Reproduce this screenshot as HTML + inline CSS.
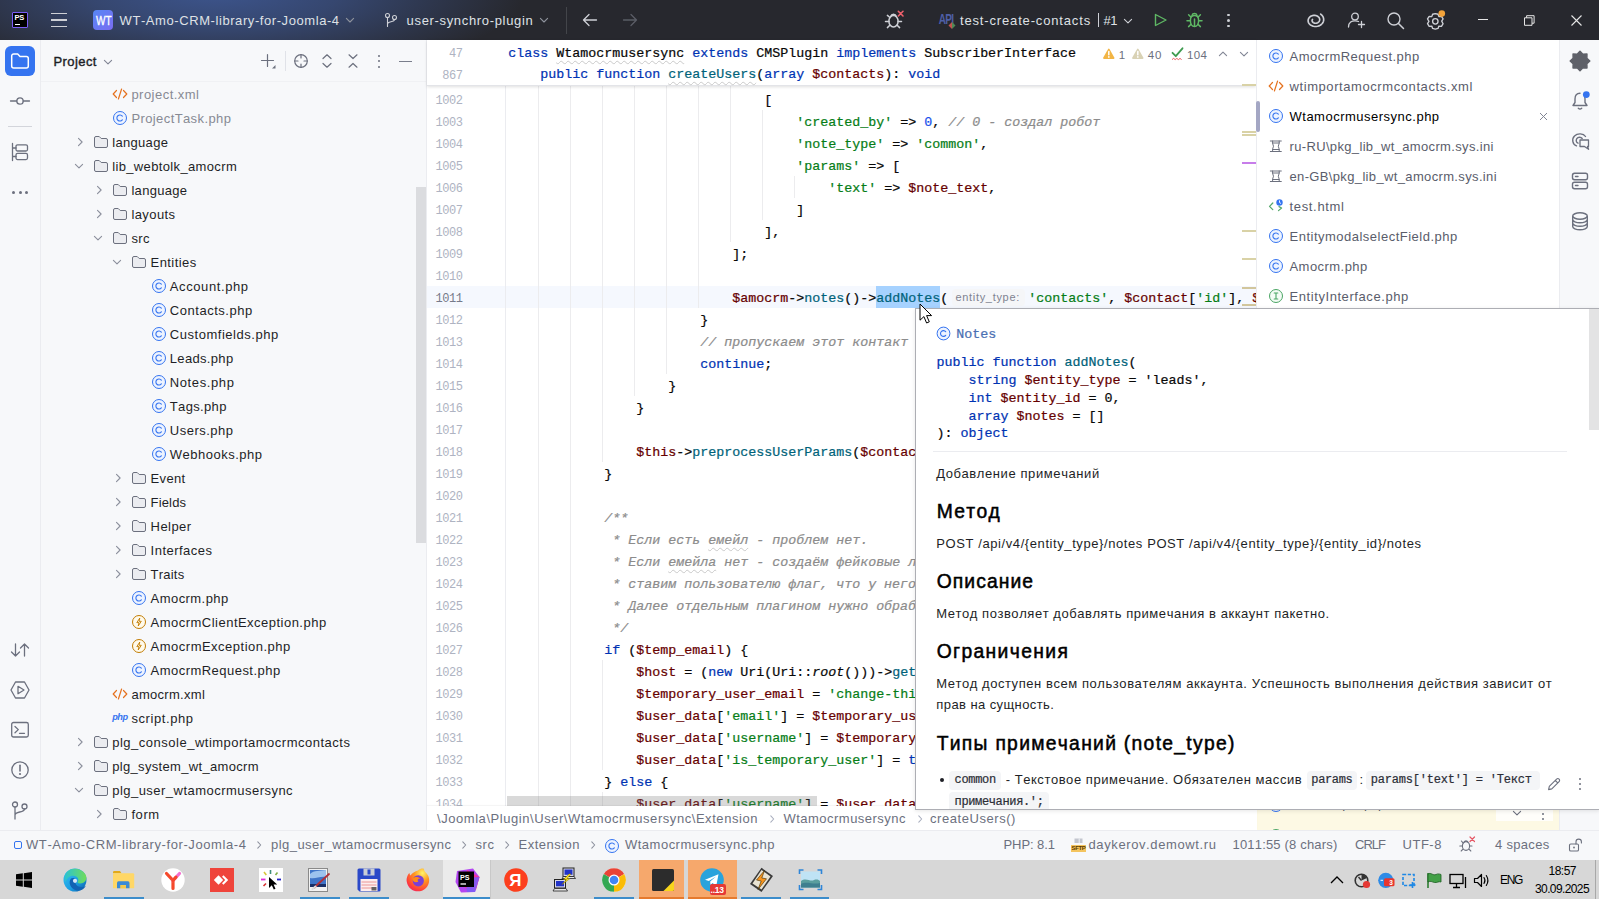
<!DOCTYPE html><html><head><meta charset="utf-8"><title>PhpStorm</title><style>
html,body{margin:0;padding:0;}
body{width:1599px;height:899px;overflow:hidden;position:relative;background:#f7f8fa;font-family:"Liberation Sans",sans-serif;font-size:13px;font-kerning:none;}
.t{position:absolute;white-space:pre;}
.b{position:absolute;}
svg{position:absolute;overflow:visible;}
.c{-webkit-text-stroke:0.22px currentColor;position:absolute;white-space:pre;font-family:"Liberation Mono",monospace;font-size:13.331px;line-height:22px;height:22px;color:#080808;}
.k{color:#0033b3}.s{color:#067d17}.n{color:#1750eb}.v{color:#660000}.f{color:#00627a}.cm{color:#8c8c8c;font-style:italic}.i{font-style:italic}.lk{color:#4a6fb3}
.ln{position:absolute;font-family:"Liberation Mono",monospace;font-size:12px;letter-spacing:-0.45px;line-height:22px;color:#aeb3c2;text-align:right;width:40px;left:422.5px;white-space:pre;}
.wavy{text-decoration:underline wavy #c9c9c9 1px;text-underline-offset:3px;}
</style></head><body>
<div class="b" style="left:0;top:0;width:1599px;height:40px;background:radial-gradient(ellipse 310px 90px at 215px -8px,rgba(66,96,165,0.80) 0%,rgba(66,96,165,0.55) 40%,rgba(66,96,165,0.22) 75%,rgba(66,96,165,0) 100%),#27282e;"></div>
<div class="b" style="left:12px;top:12px;width:16px;height:16px;background:#000;border:1px solid #7a5cf5;box-sizing:border-box;border-radius:1px;"></div>
<div class="t" style="left:14.5px;top:14px;font-size:7.5px;line-height:8px;font-weight:700;color:#fff;letter-spacing:-0.2px">PS</div>
<div class="b" style="left:15px;top:23.6px;width:4.6px;height:1.2px;background:#fff;"></div>
<div class="b" style="left:51px;top:12.9px;width:16px;height:1.3px;background:#ced0d6;"></div>
<div class="b" style="left:51px;top:19.4px;width:16px;height:1.3px;background:#ced0d6;"></div>
<div class="b" style="left:51px;top:25.9px;width:16px;height:1.3px;background:#ced0d6;"></div>
<div class="b" style="left:93px;top:10px;width:20px;height:20px;background:linear-gradient(135deg,#5687f5,#7a6cf2);border-radius:4px;"></div>
<div class="t" style="left:95.8px;top:10.5px;line-height:20px;font-size:13.5px;font-weight:400;-webkit-text-stroke:0.35px #fff;color:#fff;transform:scaleX(0.74);transform-origin:0 50%;">WT</div>
<div class="t" style="left:119.60px;top:10.90px;line-height:20px;font-size:13px;color:#dfe1e5;letter-spacing:0.576px;">WT-Amo-CRM-library-for-Joomla-4</div>
<svg style="left:342px;top:12.3px;" width="16" height="16" viewBox="0 0 16 16" fill="none"><path d="M4.4 6.4 L8 10 L11.6 6.4" stroke="#8f939d" stroke-width="1.1" stroke-linecap="round" stroke-linejoin="round"/></svg>
<svg style="left:383px;top:12px;" width="16" height="16" viewBox="0 0 16 16" fill="none"><circle cx="4.5" cy="3.5" r="2" stroke="#ced0d6" stroke-width="1.1"/><circle cx="11.5" cy="5.5" r="2" stroke="#ced0d6" stroke-width="1.1"/><path d="M4.5 5.5 V14.5 M11.5 7.5 C11.5 10.5 4.5 9 4.5 12" stroke="#ced0d6" stroke-width="1.1" stroke-linecap="round"/></svg>
<div class="t" style="left:406.60px;top:10.90px;line-height:20px;font-size:13px;color:#dfe1e5;letter-spacing:0.665px;">user-synchro-plugin</div>
<svg style="left:536.3px;top:12.3px;" width="16" height="16" viewBox="0 0 16 16" fill="none"><path d="M4.4 6.4 L8 10 L11.6 6.4" stroke="#8f939d" stroke-width="1.1" stroke-linecap="round" stroke-linejoin="round"/></svg>
<div class="b" style="left:566px;top:7px;width:1px;height:27px;background:#43454a;"></div>
<svg style="left:582px;top:12px;" width="16" height="16" viewBox="0 0 16 16" fill="none"><path d="M14.5 8 H1.5 M7 2.5 L1.5 8 L7 13.5" stroke="#ced0d6" stroke-width="1.3" stroke-linecap="round" stroke-linejoin="round"/></svg>
<svg style="left:622px;top:12px;" width="16" height="16" viewBox="0 0 16 16" fill="none"><path d="M1.5 8 H14.5 M9 2.5 L14.5 8 L9 13.5" stroke="#5a5d66" stroke-width="1.3" stroke-linecap="round" stroke-linejoin="round"/></svg>
<svg style="left:884px;top:9px;" width="22" height="22" viewBox="0 0 22 22" fill="none"><ellipse cx="9.5" cy="12.2" rx="4.6" ry="5.7" stroke="#ced0d6" stroke-width="1.5"/><path d="M5.6 8.3 L3.4 6.4 M5 12.5 H1.5 M5.8 16.3 L3.4 18.6 M13.2 16.3 L15.6 18.6 M14 12.5 H17.5 M6.8 7.2 a2.8 2.8 0 0 1 5.4 0" stroke="#ced0d6" stroke-width="1.5" stroke-linecap="round"/><path d="M14.3 2.3 L19 7 M19 2.3 L14.3 7" stroke="#f0616d" stroke-width="1.6" stroke-linecap="round"/></svg>
<div class="t" style="left:938.8px;top:10.5px;font-size:10px;line-height:18px;font-weight:700;color:#4e5fa6;letter-spacing:-0.7px;transform:scaleY(1.4)">API</div>
<svg style="left:948px;top:21px;" width="8" height="9" viewBox="0 0 8 9" fill="none"><path d="M0.5 4.5 L4 1 V8 Z" fill="#c25450"/><path d="M7.5 4.5 L4 1 V8 Z" fill="#4f8a55"/></svg>
<div class="t" style="left:960.00px;top:10.90px;line-height:20px;font-size:13px;color:#dfe1e5;letter-spacing:0.842px;">test-create-contacts</div>
<div class="b" style="left:1097.5px;top:13px;width:1px;height:14px;background:#ced0d6;"></div>
<div class="t" style="left:1103.50px;top:10.90px;line-height:20px;font-size:13px;color:#dfe1e5;letter-spacing:-0.484px;">#1</div>
<svg style="left:1119.5px;top:13px;" width="16" height="16" viewBox="0 0 16 16" fill="none"><path d="M4.4 6.3 L8 9.9 L11.6 6.3" stroke="#ced0d6" stroke-width="1.1" stroke-linecap="round" stroke-linejoin="round"/></svg>
<svg style="left:1152px;top:12px;" width="16" height="16" viewBox="0 0 16 16" fill="none"><path d="M3.5 2.5 L14 8 L3.5 13.5 Z" stroke="#5fb865" stroke-width="1.4" stroke-linejoin="round"/></svg>
<svg style="left:1185px;top:11px;" width="19" height="18" viewBox="0 0 19 18" fill="none"><path d="M9.5 4.6 C12.3 4.6 13.6 6.6 13.6 9.5 C13.6 12.8 12 15.6 9.5 15.6 C7 15.6 5.4 12.8 5.4 9.5 C5.4 6.6 6.7 4.6 9.5 4.6 Z" stroke="#5fb865" stroke-width="1.5"/><path d="M5.8 6 L3.6 3.8 M13.2 6 L15.4 3.8 M5.3 9.8 H2 M13.7 9.8 H17 M6 13.3 L3.6 15.6 M13 13.3 L15.4 15.6 M7 4.4 a2.6 2.6 0 0 1 5 0 M9.5 8 V15" stroke="#5fb865" stroke-width="1.5" stroke-linecap="round"/></svg>
<div class="b" style="left:1227.2px;top:13.5px;width:2.6px;height:2.6px;background:#ced0d6;border-radius:2px"></div>
<div class="b" style="left:1227.2px;top:19.2px;width:2.6px;height:2.6px;background:#ced0d6;border-radius:2px"></div>
<div class="b" style="left:1227.2px;top:24.9px;width:2.6px;height:2.6px;background:#ced0d6;border-radius:2px"></div>
<svg style="left:1305.3px;top:9.8px;" width="20" height="20" viewBox="0 0 20 20" fill="none"><path transform="scale(1.1)" d="M6.84 8.55 L6.63 8.86 L6.49 9.21 L6.43 9.59 L6.46 9.99 L6.59 10.39 L6.80 10.78 L7.11 11.14 L7.51 11.46 L7.99 11.72 L8.54 11.91 L9.13 12.02 L9.76 12.04 L10.40 11.96 L11.03 11.78 L11.63 11.51 L12.17 11.14 L12.63 10.69 L12.99 10.16 L13.24 9.58 L13.36 8.95 L13.33 8.30 L13.16 7.65 L12.85 7.02 L12.39 6.44 L11.80 5.92 L11.09 5.49 L10.28 5.16 L9.40 4.95 L8.46 4.88 L7.51 4.94 L6.57 5.15 L5.67 5.50 L4.85 5.98 L4.14 6.59 L3.55 7.30 L3.13 8.11 L2.88 8.97 L2.83 9.88 L2.97 10.79 L3.32 11.68 L3.86 12.51 L4.59 13.27 L5.49 13.92 L6.52 14.43 L7.67 14.79 L8.90 14.98 L10.17 14.99 L11.44 14.81 L12.66 14.44 L13.80 13.89 L14.82 13.17 L15.67 12.31 L16.34 11.32 L16.78 10.23 L16.98 9.09 L16.93 7.91 L16.63 6.75 L16.06 5.64 L15.26 4.61 L14.23 3.71" stroke="#ced0d6" stroke-width="1.5" stroke-linecap="round" stroke-linejoin="round"/></svg>
<svg style="left:1347px;top:11px;" width="19" height="18" viewBox="0 0 19 18" fill="none"><circle cx="8" cy="5.5" r="3.3" stroke="#ced0d6" stroke-width="1.3"/><path d="M1.5 16 C1.5 11 5 9.8 8 9.8 C9.5 9.8 10.5 10 11.5 10.5 M14.5 10.5 V16.5 M11.5 13.5 H17.5" stroke="#ced0d6" stroke-width="1.3" stroke-linecap="round"/></svg>
<svg style="left:1386px;top:11px;" width="19" height="18" viewBox="0 0 19 18" fill="none"><circle cx="8" cy="8" r="6" stroke="#ced0d6" stroke-width="1.4"/><path d="M12.5 12.5 L17.5 17.5" stroke="#ced0d6" stroke-width="1.5" stroke-linecap="round"/></svg>
<svg style="left:1425px;top:9.5px;" width="21" height="21" viewBox="0 0 21 21" fill="none"><g transform="translate(-0.3,1.2) scale(1.18)"><path d="M9 2 L11.3 2.6 L12 4.6 L14.2 4.4 L15.6 6.6 L14.4 8.4 L15.6 10.6 L14.2 12.8 L12 12.6 L11.3 14.6 L9 15.2 L6.7 14.6 L6 12.6 L3.8 12.8 L2.4 10.6 L3.6 8.6 L2.4 6.6 L3.8 4.4 L6 4.6 L6.7 2.6 Z" stroke="#ced0d6" stroke-width="1.15" stroke-linejoin="round"/><circle cx="9" cy="8.6" r="2.3" stroke="#ced0d6" stroke-width="1.15"/></g><circle cx="16.8" cy="3.6" r="3.3" fill="#f2a33a"/></svg>
<div class="b" style="left:1477.5px;top:18.8px;width:10.5px;height:1px;background:#e6e6e6;"></div>
<svg style="left:1524px;top:14.5px;" width="12" height="12" viewBox="0 0 12 12" fill="none"><path d="M0.5 2.8 H8 V10.3 H0.5 Z M2.6 2.8 V0.7 H10.1 V8.2 H8" stroke="#e6e6e6" stroke-width="1"/></svg>
<svg style="left:1571px;top:14.8px;" width="12" height="12" viewBox="0 0 12 12" fill="none"><path d="M0.5 0.5 L10.5 10.5 M10.5 0.5 L0.5 10.5" stroke="#e6e6e6" stroke-width="1.1"/></svg>
<div class="b" style="left:0px;top:40px;width:40px;height:790px;background:#f7f8fa;"></div>
<div class="b" style="left:40px;top:40px;width:1px;height:790px;background:#ebecf0;"></div>
<div class="b" style="left:5px;top:46px;width:30px;height:30px;background:#3574f0;border-radius:6px;"></div>
<svg style="left:10px;top:51px;" width="20" height="20" viewBox="0 0 20 20" fill="none"><path d="M1.7 5 a2 2 0 0 1 2 -2 h4 l2.3 2.4 H16.3 a2 2 0 0 1 2 2 V15 a2 2 0 0 1 -2 2 H3.7 a2 2 0 0 1 -2 -2 Z" stroke="#fff" stroke-width="1.5" stroke-linejoin="round"/></svg>
<svg style="left:10px;top:91px;" width="20" height="20" viewBox="0 0 20 20" fill="none"><circle cx="10" cy="10" r="3.2" stroke="#6c707e" stroke-width="1.3"/><path d="M0.5 10 H6.8 M13.2 10 H19.5" stroke="#6c707e" stroke-width="1.3" stroke-linecap="round"/></svg>
<div class="b" style="left:8px;top:126px;width:24px;height:1px;background:#d3d5db;"></div>
<svg style="left:10px;top:142px;" width="20" height="20" viewBox="0 0 20 20" fill="none"><path d="M2.5 1.5 V18.5 M2.5 6 H6 M2.5 14.5 H6" stroke="#6c707e" stroke-width="1.3" stroke-linecap="round"/><rect x="6" y="2.8" width="11.5" height="6.2" rx="1.5" stroke="#6c707e" stroke-width="1.3"/><rect x="6" y="11.4" width="11.5" height="6.2" rx="1.5" stroke="#6c707e" stroke-width="1.3"/></svg>
<div class="b" style="left:11.9px;top:190.5px;width:3px;height:3px;background:#6c707e;border-radius:50%"></div>
<div class="b" style="left:18.5px;top:190.5px;width:3px;height:3px;background:#6c707e;border-radius:50%"></div>
<div class="b" style="left:25.1px;top:190.5px;width:3px;height:3px;background:#6c707e;border-radius:50%"></div>
<svg style="left:10px;top:640px;" width="20" height="20" viewBox="0 0 20 20" fill="none"><path d="M5.5 4 V16 M1.5 12 L5.5 16 L9.5 12 M14.5 16 V4 M10.5 8 L14.5 4 L18.5 8" stroke="#6c707e" stroke-width="1.3" stroke-linecap="round" stroke-linejoin="round"/></svg>
<svg style="left:10px;top:680px;" width="20" height="20" viewBox="0 0 20 20" fill="none"><path d="M5.5 2 H14.5 L19 10 L14.5 18 H5.5 L1 10 Z" stroke="#6c707e" stroke-width="1.3" stroke-linejoin="round"/><path d="M8 6.3 L14 10 L8 13.7 Z" stroke="#6c707e" stroke-width="1.3" stroke-linejoin="round"/></svg>
<svg style="left:10px;top:720px;" width="20" height="20" viewBox="0 0 20 20" fill="none"><rect x="1.7" y="2.5" width="16.6" height="14.5" rx="1.8" stroke="#6c707e" stroke-width="1.3"/><path d="M5 6.5 L8.3 9.6 L5 12.7 M9.5 13.3 H14.5" stroke="#6c707e" stroke-width="1.3" stroke-linecap="round" stroke-linejoin="round"/></svg>
<svg style="left:10px;top:759.5px;" width="20" height="20" viewBox="0 0 20 20" fill="none"><circle cx="10" cy="10" r="8.2" stroke="#6c707e" stroke-width="1.3"/><path d="M10 5.2 V11" stroke="#6c707e" stroke-width="1.6" stroke-linecap="round"/><circle cx="10" cy="14" r="1.1" fill="#6c707e"/></svg>
<svg style="left:10px;top:799.5px;" width="20" height="20" viewBox="0 0 20 20" fill="none"><circle cx="5" cy="4.5" r="2.5" stroke="#6c707e" stroke-width="1.3"/><circle cx="14.5" cy="6.5" r="2.5" stroke="#6c707e" stroke-width="1.3"/><path d="M5 7 V19 M14.5 9 C14.5 13 5 11 5 15" stroke="#6c707e" stroke-width="1.3" stroke-linecap="round"/></svg>
<div class="b" style="left:41px;top:40px;width:385px;height:790px;background:#f7f8fa;"></div>
<div class="b" style="left:426px;top:40px;width:1px;height:790px;background:#ebecf0;"></div>
<div class="t" style="left:53.50px;top:51.60px;line-height:20px;font-size:13px;color:#1e1f26;letter-spacing:0.419px;-webkit-text-stroke:0.4px #1e1f26;">Project</div>
<svg style="left:100px;top:54px;" width="16" height="16" viewBox="0 0 16 16" fill="none"><path d="M4.4 6.3 L8 9.9 L11.6 6.3" stroke="#818594" stroke-width="1.1" stroke-linecap="round" stroke-linejoin="round"/></svg>
<svg style="left:260px;top:53px;" width="16" height="16" viewBox="0 0 16 16" fill="none"><path d="M7.5 1.5 V13.5 M1.5 7.5 H13.5" stroke="#6c707e" stroke-width="1.2" stroke-linecap="round"/><path d="M15.5 12 V15.5 H12 Z" fill="#6c707e"/></svg>
<div class="b" style="left:284.5px;top:51px;width:1px;height:20px;background:#e0e2e8;"></div>
<svg style="left:293px;top:53px;" width="16" height="16" viewBox="0 0 16 16" fill="none"><circle cx="8" cy="8" r="6.3" stroke="#6c707e" stroke-width="1.2"/><path d="M8 1.7 V5 M8 11 V14.3 M1.7 8 H5 M11 8 H14.3" stroke="#6c707e" stroke-width="1.2" stroke-linecap="round"/></svg>
<svg style="left:319px;top:53px;" width="16" height="16" viewBox="0 0 16 16" fill="none"><path d="M4 5.5 L8 1.8 L12 5.5 M4 10.5 L8 14.2 L12 10.5" stroke="#6c707e" stroke-width="1.2" stroke-linecap="round" stroke-linejoin="round"/></svg>
<svg style="left:345px;top:53px;" width="16" height="16" viewBox="0 0 16 16" fill="none"><path d="M4 1.8 L8 5.5 L12 1.8 M4 14.2 L8 10.5 L12 14.2" stroke="#6c707e" stroke-width="1.2" stroke-linecap="round" stroke-linejoin="round"/></svg>
<div class="b" style="left:377.8px;top:54.5px;width:2px;height:2px;background:#6c707e;border-radius:1px"></div>
<div class="b" style="left:377.8px;top:60px;width:2px;height:2px;background:#6c707e;border-radius:1px"></div>
<div class="b" style="left:377.8px;top:65.5px;width:2px;height:2px;background:#6c707e;border-radius:1px"></div>
<div class="b" style="left:398.5px;top:60.5px;width:13px;height:1px;background:#7a7e8c;"></div>
<div class="b" style="left:41px;top:81px;width:385px;height:1px;background:#f0f1f4;"></div>
<div class="b" style="left:416px;top:187px;width:10px;height:356px;background:#d9dadd;border-radius:0px;opacity:.95"></div>
<svg style="left:112.2px;top:86.4px;" width="16" height="16" viewBox="0 0 16 16" fill="none"><path d="M4.5 4.5 L1.2 8 L4.5 11.5 M11.5 4.5 L14.8 8 L11.5 11.5 M9.6 3 L6.4 13" stroke="#e5721f" stroke-width="1.2" stroke-linecap="round" stroke-linejoin="round"/></svg>
<div class="t" style="left:131.40px;top:84.70px;line-height:20px;font-size:13px;color:#878a94;letter-spacing:0.476px;">project.xml</div>
<svg style="left:112.2px;top:110.4px;" width="16" height="16" viewBox="0 0 16 16" fill="none"><circle cx="8" cy="8" r="6.5" fill="#edf3ff" stroke="#3574f0" stroke-width="1"/><path d="M10.3 6.2 A3 3 0 1 0 10.3 9.8" stroke="#3574f0" stroke-width="1.1" stroke-linecap="round"/></svg>
<div class="t" style="left:131.40px;top:108.70px;line-height:20px;font-size:13px;color:#878a94;letter-spacing:0.398px;">ProjectTask.php</div>
<svg style="left:71.5px;top:134.4px;" width="16" height="16" viewBox="0 0 16 16" fill="none"><path d="M6.5 4.4 L10.1 8 L6.5 11.6" stroke="#8b8f9c" stroke-width="1.1" stroke-linecap="round" stroke-linejoin="round"/></svg>
<svg style="left:93.0px;top:134.4px;" width="16" height="16" viewBox="0 0 16 16" fill="none"><path d="M1.5 4 a1.5 1.5 0 0 1 1.5 -1.5 h3.2 l2 2 H13 a1.5 1.5 0 0 1 1.5 1.5 V12 a1.5 1.5 0 0 1 -1.5 1.5 H3 A1.5 1.5 0 0 1 1.5 12 Z" fill="#ebecf0" stroke="#6c707e" stroke-width="1"/></svg>
<div class="t" style="left:112.20px;top:132.70px;line-height:20px;font-size:13px;color:#1e1f26;letter-spacing:0.325px;">language</div>
<svg style="left:71.0px;top:158.4px;" width="16" height="16" viewBox="0 0 16 16" fill="none"><path d="M4.4 6.3 L8 9.9 L11.6 6.3" stroke="#8b8f9c" stroke-width="1.1" stroke-linecap="round" stroke-linejoin="round"/></svg>
<svg style="left:93.0px;top:158.4px;" width="16" height="16" viewBox="0 0 16 16" fill="none"><path d="M1.5 4 a1.5 1.5 0 0 1 1.5 -1.5 h3.2 l2 2 H13 a1.5 1.5 0 0 1 1.5 1.5 V12 a1.5 1.5 0 0 1 -1.5 1.5 H3 A1.5 1.5 0 0 1 1.5 12 Z" fill="#ebecf0" stroke="#6c707e" stroke-width="1"/></svg>
<div class="t" style="left:112.20px;top:156.70px;line-height:20px;font-size:13px;color:#1e1f26;letter-spacing:0.356px;">lib_webtolk_amocrm</div>
<svg style="left:90.7px;top:182.4px;" width="16" height="16" viewBox="0 0 16 16" fill="none"><path d="M6.5 4.4 L10.1 8 L6.5 11.6" stroke="#8b8f9c" stroke-width="1.1" stroke-linecap="round" stroke-linejoin="round"/></svg>
<svg style="left:112.2px;top:182.4px;" width="16" height="16" viewBox="0 0 16 16" fill="none"><path d="M1.5 4 a1.5 1.5 0 0 1 1.5 -1.5 h3.2 l2 2 H13 a1.5 1.5 0 0 1 1.5 1.5 V12 a1.5 1.5 0 0 1 -1.5 1.5 H3 A1.5 1.5 0 0 1 1.5 12 Z" fill="#ebecf0" stroke="#6c707e" stroke-width="1"/></svg>
<div class="t" style="left:131.40px;top:180.70px;line-height:20px;font-size:13px;color:#1e1f26;letter-spacing:0.312px;">language</div>
<svg style="left:90.7px;top:206.4px;" width="16" height="16" viewBox="0 0 16 16" fill="none"><path d="M6.5 4.4 L10.1 8 L6.5 11.6" stroke="#8b8f9c" stroke-width="1.1" stroke-linecap="round" stroke-linejoin="round"/></svg>
<svg style="left:112.2px;top:206.4px;" width="16" height="16" viewBox="0 0 16 16" fill="none"><path d="M1.5 4 a1.5 1.5 0 0 1 1.5 -1.5 h3.2 l2 2 H13 a1.5 1.5 0 0 1 1.5 1.5 V12 a1.5 1.5 0 0 1 -1.5 1.5 H3 A1.5 1.5 0 0 1 1.5 12 Z" fill="#ebecf0" stroke="#6c707e" stroke-width="1"/></svg>
<div class="t" style="left:131.40px;top:204.70px;line-height:20px;font-size:13px;color:#1e1f26;letter-spacing:0.414px;">layouts</div>
<svg style="left:90.2px;top:230.4px;" width="16" height="16" viewBox="0 0 16 16" fill="none"><path d="M4.4 6.3 L8 9.9 L11.6 6.3" stroke="#8b8f9c" stroke-width="1.1" stroke-linecap="round" stroke-linejoin="round"/></svg>
<svg style="left:112.2px;top:230.4px;" width="16" height="16" viewBox="0 0 16 16" fill="none"><path d="M1.5 4 a1.5 1.5 0 0 1 1.5 -1.5 h3.2 l2 2 H13 a1.5 1.5 0 0 1 1.5 1.5 V12 a1.5 1.5 0 0 1 -1.5 1.5 H3 A1.5 1.5 0 0 1 1.5 12 Z" fill="#ebecf0" stroke="#6c707e" stroke-width="1"/></svg>
<div class="t" style="left:131.40px;top:228.70px;line-height:20px;font-size:13px;color:#1e1f26;letter-spacing:0.352px;">src</div>
<svg style="left:109.4px;top:254.39999999999998px;" width="16" height="16" viewBox="0 0 16 16" fill="none"><path d="M4.4 6.3 L8 9.9 L11.6 6.3" stroke="#8b8f9c" stroke-width="1.1" stroke-linecap="round" stroke-linejoin="round"/></svg>
<svg style="left:131.4px;top:254.39999999999998px;" width="16" height="16" viewBox="0 0 16 16" fill="none"><path d="M1.5 4 a1.5 1.5 0 0 1 1.5 -1.5 h3.2 l2 2 H13 a1.5 1.5 0 0 1 1.5 1.5 V12 a1.5 1.5 0 0 1 -1.5 1.5 H3 A1.5 1.5 0 0 1 1.5 12 Z" fill="#ebecf0" stroke="#6c707e" stroke-width="1"/></svg>
<div class="t" style="left:150.60px;top:252.70px;line-height:20px;font-size:13px;color:#1e1f26;letter-spacing:0.420px;">Entities</div>
<svg style="left:150.6px;top:278.4px;" width="16" height="16" viewBox="0 0 16 16" fill="none"><circle cx="8" cy="8" r="6.5" fill="#edf3ff" stroke="#3574f0" stroke-width="1"/><path d="M10.3 6.2 A3 3 0 1 0 10.3 9.8" stroke="#3574f0" stroke-width="1.1" stroke-linecap="round"/></svg>
<div class="t" style="left:169.80px;top:276.70px;line-height:20px;font-size:13px;color:#1e1f26;letter-spacing:0.602px;">Account.php</div>
<svg style="left:150.6px;top:302.4px;" width="16" height="16" viewBox="0 0 16 16" fill="none"><circle cx="8" cy="8" r="6.5" fill="#edf3ff" stroke="#3574f0" stroke-width="1"/><path d="M10.3 6.2 A3 3 0 1 0 10.3 9.8" stroke="#3574f0" stroke-width="1.1" stroke-linecap="round"/></svg>
<div class="t" style="left:169.80px;top:300.70px;line-height:20px;font-size:13px;color:#1e1f26;letter-spacing:0.533px;">Contacts.php</div>
<svg style="left:150.6px;top:326.4px;" width="16" height="16" viewBox="0 0 16 16" fill="none"><circle cx="8" cy="8" r="6.5" fill="#edf3ff" stroke="#3574f0" stroke-width="1"/><path d="M10.3 6.2 A3 3 0 1 0 10.3 9.8" stroke="#3574f0" stroke-width="1.1" stroke-linecap="round"/></svg>
<div class="t" style="left:169.80px;top:324.70px;line-height:20px;font-size:13px;color:#1e1f26;letter-spacing:0.528px;">Customfields.php</div>
<svg style="left:150.6px;top:350.4px;" width="16" height="16" viewBox="0 0 16 16" fill="none"><circle cx="8" cy="8" r="6.5" fill="#edf3ff" stroke="#3574f0" stroke-width="1"/><path d="M10.3 6.2 A3 3 0 1 0 10.3 9.8" stroke="#3574f0" stroke-width="1.1" stroke-linecap="round"/></svg>
<div class="t" style="left:169.80px;top:348.70px;line-height:20px;font-size:13px;color:#1e1f26;letter-spacing:0.330px;">Leads.php</div>
<svg style="left:150.6px;top:374.4px;" width="16" height="16" viewBox="0 0 16 16" fill="none"><circle cx="8" cy="8" r="6.5" fill="#edf3ff" stroke="#3574f0" stroke-width="1"/><path d="M10.3 6.2 A3 3 0 1 0 10.3 9.8" stroke="#3574f0" stroke-width="1.1" stroke-linecap="round"/></svg>
<div class="t" style="left:169.80px;top:372.70px;line-height:20px;font-size:13px;color:#1e1f26;letter-spacing:0.604px;">Notes.php</div>
<svg style="left:150.6px;top:398.4px;" width="16" height="16" viewBox="0 0 16 16" fill="none"><circle cx="8" cy="8" r="6.5" fill="#edf3ff" stroke="#3574f0" stroke-width="1"/><path d="M10.3 6.2 A3 3 0 1 0 10.3 9.8" stroke="#3574f0" stroke-width="1.1" stroke-linecap="round"/></svg>
<div class="t" style="left:169.80px;top:396.70px;line-height:20px;font-size:13px;color:#1e1f26;letter-spacing:0.337px;">Tags.php</div>
<svg style="left:150.6px;top:422.4px;" width="16" height="16" viewBox="0 0 16 16" fill="none"><circle cx="8" cy="8" r="6.5" fill="#edf3ff" stroke="#3574f0" stroke-width="1"/><path d="M10.3 6.2 A3 3 0 1 0 10.3 9.8" stroke="#3574f0" stroke-width="1.1" stroke-linecap="round"/></svg>
<div class="t" style="left:169.80px;top:420.70px;line-height:20px;font-size:13px;color:#1e1f26;letter-spacing:0.494px;">Users.php</div>
<svg style="left:150.6px;top:446.4px;" width="16" height="16" viewBox="0 0 16 16" fill="none"><circle cx="8" cy="8" r="6.5" fill="#edf3ff" stroke="#3574f0" stroke-width="1"/><path d="M10.3 6.2 A3 3 0 1 0 10.3 9.8" stroke="#3574f0" stroke-width="1.1" stroke-linecap="round"/></svg>
<div class="t" style="left:169.80px;top:444.70px;line-height:20px;font-size:13px;color:#1e1f26;letter-spacing:0.497px;">Webhooks.php</div>
<svg style="left:109.9px;top:470.4px;" width="16" height="16" viewBox="0 0 16 16" fill="none"><path d="M6.5 4.4 L10.1 8 L6.5 11.6" stroke="#8b8f9c" stroke-width="1.1" stroke-linecap="round" stroke-linejoin="round"/></svg>
<svg style="left:131.4px;top:470.4px;" width="16" height="16" viewBox="0 0 16 16" fill="none"><path d="M1.5 4 a1.5 1.5 0 0 1 1.5 -1.5 h3.2 l2 2 H13 a1.5 1.5 0 0 1 1.5 1.5 V12 a1.5 1.5 0 0 1 -1.5 1.5 H3 A1.5 1.5 0 0 1 1.5 12 Z" fill="#ebecf0" stroke="#6c707e" stroke-width="1"/></svg>
<div class="t" style="left:150.60px;top:468.70px;line-height:20px;font-size:13px;color:#1e1f26;letter-spacing:0.350px;">Event</div>
<svg style="left:109.9px;top:494.4px;" width="16" height="16" viewBox="0 0 16 16" fill="none"><path d="M6.5 4.4 L10.1 8 L6.5 11.6" stroke="#8b8f9c" stroke-width="1.1" stroke-linecap="round" stroke-linejoin="round"/></svg>
<svg style="left:131.4px;top:494.4px;" width="16" height="16" viewBox="0 0 16 16" fill="none"><path d="M1.5 4 a1.5 1.5 0 0 1 1.5 -1.5 h3.2 l2 2 H13 a1.5 1.5 0 0 1 1.5 1.5 V12 a1.5 1.5 0 0 1 -1.5 1.5 H3 A1.5 1.5 0 0 1 1.5 12 Z" fill="#ebecf0" stroke="#6c707e" stroke-width="1"/></svg>
<div class="t" style="left:150.60px;top:492.70px;line-height:20px;font-size:13px;color:#1e1f26;letter-spacing:0.152px;">Fields</div>
<svg style="left:109.9px;top:518.4px;" width="16" height="16" viewBox="0 0 16 16" fill="none"><path d="M6.5 4.4 L10.1 8 L6.5 11.6" stroke="#8b8f9c" stroke-width="1.1" stroke-linecap="round" stroke-linejoin="round"/></svg>
<svg style="left:131.4px;top:518.4px;" width="16" height="16" viewBox="0 0 16 16" fill="none"><path d="M1.5 4 a1.5 1.5 0 0 1 1.5 -1.5 h3.2 l2 2 H13 a1.5 1.5 0 0 1 1.5 1.5 V12 a1.5 1.5 0 0 1 -1.5 1.5 H3 A1.5 1.5 0 0 1 1.5 12 Z" fill="#ebecf0" stroke="#6c707e" stroke-width="1"/></svg>
<div class="t" style="left:150.60px;top:516.70px;line-height:20px;font-size:13px;color:#1e1f26;letter-spacing:0.434px;">Helper</div>
<svg style="left:109.9px;top:542.4px;" width="16" height="16" viewBox="0 0 16 16" fill="none"><path d="M6.5 4.4 L10.1 8 L6.5 11.6" stroke="#8b8f9c" stroke-width="1.1" stroke-linecap="round" stroke-linejoin="round"/></svg>
<svg style="left:131.4px;top:542.4px;" width="16" height="16" viewBox="0 0 16 16" fill="none"><path d="M1.5 4 a1.5 1.5 0 0 1 1.5 -1.5 h3.2 l2 2 H13 a1.5 1.5 0 0 1 1.5 1.5 V12 a1.5 1.5 0 0 1 -1.5 1.5 H3 A1.5 1.5 0 0 1 1.5 12 Z" fill="#ebecf0" stroke="#6c707e" stroke-width="1"/></svg>
<div class="t" style="left:150.60px;top:540.70px;line-height:20px;font-size:13px;color:#1e1f26;letter-spacing:0.481px;">Interfaces</div>
<svg style="left:109.9px;top:566.4px;" width="16" height="16" viewBox="0 0 16 16" fill="none"><path d="M6.5 4.4 L10.1 8 L6.5 11.6" stroke="#8b8f9c" stroke-width="1.1" stroke-linecap="round" stroke-linejoin="round"/></svg>
<svg style="left:131.4px;top:566.4px;" width="16" height="16" viewBox="0 0 16 16" fill="none"><path d="M1.5 4 a1.5 1.5 0 0 1 1.5 -1.5 h3.2 l2 2 H13 a1.5 1.5 0 0 1 1.5 1.5 V12 a1.5 1.5 0 0 1 -1.5 1.5 H3 A1.5 1.5 0 0 1 1.5 12 Z" fill="#ebecf0" stroke="#6c707e" stroke-width="1"/></svg>
<div class="t" style="left:150.60px;top:564.70px;line-height:20px;font-size:13px;color:#1e1f26;letter-spacing:0.217px;">Traits</div>
<svg style="left:131.4px;top:590.4px;" width="16" height="16" viewBox="0 0 16 16" fill="none"><circle cx="8" cy="8" r="6.5" fill="#edf3ff" stroke="#3574f0" stroke-width="1"/><path d="M10.3 6.2 A3 3 0 1 0 10.3 9.8" stroke="#3574f0" stroke-width="1.1" stroke-linecap="round"/></svg>
<div class="t" style="left:150.60px;top:588.70px;line-height:20px;font-size:13px;color:#1e1f26;letter-spacing:0.440px;">Amocrm.php</div>
<svg style="left:131.4px;top:614.4px;" width="16" height="16" viewBox="0 0 16 16" fill="none"><circle cx="8" cy="8" r="6.5" fill="#fffaeb" stroke="#c27d04" stroke-width="1"/><path d="M8.8 4 L5.8 8.6 H8 L7.2 12 L10.3 7.3 H8 Z" fill="none" stroke="#c27d04" stroke-width="0.9" stroke-linejoin="round"/></svg>
<div class="t" style="left:150.60px;top:612.70px;line-height:20px;font-size:13px;color:#1e1f26;letter-spacing:0.479px;">AmocrmClientException.php</div>
<svg style="left:131.4px;top:638.4px;" width="16" height="16" viewBox="0 0 16 16" fill="none"><circle cx="8" cy="8" r="6.5" fill="#fffaeb" stroke="#c27d04" stroke-width="1"/><path d="M8.8 4 L5.8 8.6 H8 L7.2 12 L10.3 7.3 H8 Z" fill="none" stroke="#c27d04" stroke-width="0.9" stroke-linejoin="round"/></svg>
<div class="t" style="left:150.60px;top:636.70px;line-height:20px;font-size:13px;color:#1e1f26;letter-spacing:0.496px;">AmocrmException.php</div>
<svg style="left:131.4px;top:662.4px;" width="16" height="16" viewBox="0 0 16 16" fill="none"><circle cx="8" cy="8" r="6.5" fill="#edf3ff" stroke="#3574f0" stroke-width="1"/><path d="M10.3 6.2 A3 3 0 1 0 10.3 9.8" stroke="#3574f0" stroke-width="1.1" stroke-linecap="round"/></svg>
<div class="t" style="left:150.60px;top:660.70px;line-height:20px;font-size:13px;color:#1e1f26;letter-spacing:0.463px;">AmocrmRequest.php</div>
<svg style="left:112.2px;top:686.4px;" width="16" height="16" viewBox="0 0 16 16" fill="none"><path d="M4.5 4.5 L1.2 8 L4.5 11.5 M11.5 4.5 L14.8 8 L11.5 11.5 M9.6 3 L6.4 13" stroke="#e5721f" stroke-width="1.2" stroke-linecap="round" stroke-linejoin="round"/></svg>
<div class="t" style="left:131.40px;top:684.70px;line-height:20px;font-size:13px;color:#1e1f26;letter-spacing:0.292px;">amocrm.xml</div>
<div class="t" style="left:112.2px;top:710.4px;line-height:15px;font-size:9.2px;font-weight:700;font-style:italic;color:#3574f0;letter-spacing:-0.45px">php</div>
<div class="t" style="left:131.40px;top:708.70px;line-height:20px;font-size:13px;color:#1e1f26;letter-spacing:0.582px;">script.php</div>
<svg style="left:71.5px;top:734.4px;" width="16" height="16" viewBox="0 0 16 16" fill="none"><path d="M6.5 4.4 L10.1 8 L6.5 11.6" stroke="#8b8f9c" stroke-width="1.1" stroke-linecap="round" stroke-linejoin="round"/></svg>
<svg style="left:93.0px;top:734.4px;" width="16" height="16" viewBox="0 0 16 16" fill="none"><path d="M1.5 4 a1.5 1.5 0 0 1 1.5 -1.5 h3.2 l2 2 H13 a1.5 1.5 0 0 1 1.5 1.5 V12 a1.5 1.5 0 0 1 -1.5 1.5 H3 A1.5 1.5 0 0 1 1.5 12 Z" fill="#ebecf0" stroke="#6c707e" stroke-width="1"/></svg>
<div class="t" style="left:112.20px;top:732.70px;line-height:20px;font-size:13px;color:#1e1f26;letter-spacing:0.506px;">plg_console_wtimportamocrmcontacts</div>
<svg style="left:71.5px;top:758.4px;" width="16" height="16" viewBox="0 0 16 16" fill="none"><path d="M6.5 4.4 L10.1 8 L6.5 11.6" stroke="#8b8f9c" stroke-width="1.1" stroke-linecap="round" stroke-linejoin="round"/></svg>
<svg style="left:93.0px;top:758.4px;" width="16" height="16" viewBox="0 0 16 16" fill="none"><path d="M1.5 4 a1.5 1.5 0 0 1 1.5 -1.5 h3.2 l2 2 H13 a1.5 1.5 0 0 1 1.5 1.5 V12 a1.5 1.5 0 0 1 -1.5 1.5 H3 A1.5 1.5 0 0 1 1.5 12 Z" fill="#ebecf0" stroke="#6c707e" stroke-width="1"/></svg>
<div class="t" style="left:112.20px;top:756.70px;line-height:20px;font-size:13px;color:#1e1f26;letter-spacing:0.327px;">plg_system_wt_amocrm</div>
<svg style="left:71.0px;top:782.4px;" width="16" height="16" viewBox="0 0 16 16" fill="none"><path d="M4.4 6.3 L8 9.9 L11.6 6.3" stroke="#8b8f9c" stroke-width="1.1" stroke-linecap="round" stroke-linejoin="round"/></svg>
<svg style="left:93.0px;top:782.4px;" width="16" height="16" viewBox="0 0 16 16" fill="none"><path d="M1.5 4 a1.5 1.5 0 0 1 1.5 -1.5 h3.2 l2 2 H13 a1.5 1.5 0 0 1 1.5 1.5 V12 a1.5 1.5 0 0 1 -1.5 1.5 H3 A1.5 1.5 0 0 1 1.5 12 Z" fill="#ebecf0" stroke="#6c707e" stroke-width="1"/></svg>
<div class="t" style="left:112.20px;top:780.70px;line-height:20px;font-size:13px;color:#1e1f26;letter-spacing:0.473px;">plg_user_wtamocrmusersync</div>
<svg style="left:90.7px;top:806.4px;" width="16" height="16" viewBox="0 0 16 16" fill="none"><path d="M6.5 4.4 L10.1 8 L6.5 11.6" stroke="#8b8f9c" stroke-width="1.1" stroke-linecap="round" stroke-linejoin="round"/></svg>
<svg style="left:112.2px;top:806.4px;" width="16" height="16" viewBox="0 0 16 16" fill="none"><path d="M1.5 4 a1.5 1.5 0 0 1 1.5 -1.5 h3.2 l2 2 H13 a1.5 1.5 0 0 1 1.5 1.5 V12 a1.5 1.5 0 0 1 -1.5 1.5 H3 A1.5 1.5 0 0 1 1.5 12 Z" fill="#ebecf0" stroke="#6c707e" stroke-width="1"/></svg>
<div class="t" style="left:131.40px;top:804.70px;line-height:20px;font-size:13px;color:#1e1f26;letter-spacing:0.600px;">form</div>
<div class="b" style="left:427px;top:40px;width:830px;height:790px;background:#fff;"></div>
<div class="b" style="left:427px;top:286.4px;width:829px;height:22px;background:#f5f8fe;"></div>
<div class="b" style="left:505px;top:86px;width:1px;height:722px;background:#ebecf0;"></div>
<div class="b" style="left:538.0px;top:86px;width:1px;height:722px;background:#ececee;"></div>
<div class="b" style="left:570.0px;top:86px;width:1px;height:722px;background:#ececee;"></div>
<div class="b" style="left:602.0px;top:86px;width:1px;height:376.4px;background:#ececee;"></div>
<div class="b" style="left:602.0px;top:660.4px;width:1px;height:110.0px;background:#ececee;"></div>
<div class="b" style="left:602.0px;top:792.4px;width:1px;height:15.600000000000023px;background:#ececee;"></div>
<div class="b" style="left:634.0px;top:86px;width:1px;height:310.4px;background:#ececee;"></div>
<div class="b" style="left:666.0px;top:86px;width:1px;height:288.4px;background:#ececee;"></div>
<div class="b" style="left:698.0px;top:86px;width:1px;height:222.39999999999998px;background:#ececee;"></div>
<div class="b" style="left:730.0px;top:86px;width:1px;height:156.4px;background:#ececee;"></div>
<div class="b" style="left:762.0px;top:110.4px;width:1px;height:110.0px;background:#ececee;"></div>
<div class="b" style="left:794.0px;top:176.4px;width:1px;height:22.0px;background:#ececee;"></div>
<div class="b" style="left:876.2px;top:286.4px;width:64.0px;height:22px;background:#a6d2ff;"></div>
<div class="ln" style="top:89.9px;">1002</div>
<div class="ln" style="top:111.9px;">1003</div>
<div class="ln" style="top:133.9px;">1004</div>
<div class="ln" style="top:155.9px;">1005</div>
<div class="ln" style="top:177.9px;">1006</div>
<div class="ln" style="top:199.9px;">1007</div>
<div class="ln" style="top:221.9px;">1008</div>
<div class="ln" style="top:243.9px;">1009</div>
<div class="ln" style="top:265.9px;">1010</div>
<div class="ln" style="top:287.9px;color:#767a8a;">1011</div>
<div class="ln" style="top:309.9px;">1012</div>
<div class="ln" style="top:331.9px;">1013</div>
<div class="ln" style="top:353.9px;">1014</div>
<div class="ln" style="top:375.9px;">1015</div>
<div class="ln" style="top:397.9px;">1016</div>
<div class="ln" style="top:419.9px;">1017</div>
<div class="ln" style="top:441.9px;">1018</div>
<div class="ln" style="top:463.9px;">1019</div>
<div class="ln" style="top:485.9px;">1020</div>
<div class="ln" style="top:507.9px;">1021</div>
<div class="ln" style="top:529.9px;">1022</div>
<div class="ln" style="top:551.9px;">1023</div>
<div class="ln" style="top:573.9px;">1024</div>
<div class="ln" style="top:595.9px;">1025</div>
<div class="ln" style="top:617.9px;">1026</div>
<div class="ln" style="top:639.9px;">1027</div>
<div class="ln" style="top:661.9px;">1028</div>
<div class="ln" style="top:683.9px;">1029</div>
<div class="ln" style="top:705.9px;">1030</div>
<div class="ln" style="top:727.9px;">1031</div>
<div class="ln" style="top:749.9px;">1032</div>
<div class="ln" style="top:771.9px;">1033</div>
<div class="ln" style="top:793.9px;">1034</div>
<div class="c" style="left:764.2px;top:89.6px">[</div>
<div class="c" style="left:796.2px;top:111.6px"><span class="s">'created_by'</span> =&gt; <span class="n">0</span>, <span class="cm">// 0 - создал робот</span></div>
<div class="c" style="left:796.2px;top:133.6px"><span class="s">'note_type'</span> =&gt; <span class="s">'common'</span>,</div>
<div class="c" style="left:796.2px;top:155.6px"><span class="s">'params'</span> =&gt; [</div>
<div class="c" style="left:828.2px;top:177.6px"><span class="s">'text'</span> =&gt; <span class="v">$note_text</span>,</div>
<div class="c" style="left:796.2px;top:199.6px">]</div>
<div class="c" style="left:764.2px;top:221.6px">],</div>
<div class="c" style="left:732.2px;top:243.6px">];</div>
<div class="c" style="left:732.2px;top:287.6px"><span class="v">$amocrm</span>-&gt;<span class="f">notes</span>()-&gt;<span class="f">addNotes</span>(</div>
<div class="b" style="left:951.5px;top:288.9px;width:73px;height:17px;background:#f5f6f8;border-radius:4px;"></div>
<div class="t" style="left:955.40px;top:287.00px;line-height:20px;font-size:11px;color:#7f8391;letter-spacing:0.695px;">entity_type:</div>
<div class="c" style="left:1028.2px;top:287.6px"><span class="s">'contacts'</span>, <span class="v">$contact</span>[<span class="s">'id'</span>], <span class="v">$</span></div>
<div class="c" style="left:700.2px;top:309.6px">}</div>
<div class="c" style="left:700.2px;top:331.6px"><span class="cm">// пропускаем этот контакт</span></div>
<div class="c" style="left:700.2px;top:353.6px"><span class="k">continue</span>;</div>
<div class="c" style="left:668.2px;top:375.6px">}</div>
<div class="c" style="left:636.2px;top:397.6px">}</div>
<div class="c" style="left:636.2px;top:441.6px"><span class="v">$this</span>-&gt;<span class="f">preprocessUserParams</span>(<span class="v">$contact</span></div>
<div class="c" style="left:604.2px;top:463.6px">}</div>
<div class="c" style="left:604.2px;top:507.6px"><span class="cm">/**</span></div>
<div class="c" style="left:604.2px;top:529.6px"><span class="cm"> * Если есть </span><span class="cm wavy">емейл</span><span class="cm"> - проблем нет.</span></div>
<div class="c" style="left:604.2px;top:551.6px"><span class="cm"> * Если </span><span class="cm wavy">емейла</span><span class="cm"> нет - создаём фейковые логин</span></div>
<div class="c" style="left:604.2px;top:573.6px"><span class="cm"> * ставим пользователю флаг, что у него временный</span></div>
<div class="c" style="left:604.2px;top:595.6px"><span class="cm"> * Далее отдельным плагином нужно обрабатывать</span></div>
<div class="c" style="left:604.2px;top:617.6px"><span class="cm"> */</span></div>
<div class="c" style="left:604.2px;top:639.6px"><span class="k">if</span> (<span class="v">$temp_email</span>) {</div>
<div class="c" style="left:636.2px;top:661.6px"><span class="v">$host</span> = (<span class="k">new</span> Uri(Uri::<span class="i">root</span>()))-&gt;<span class="f">getHost</span>();</div>
<div class="c" style="left:636.2px;top:683.6px"><span class="v">$temporary_user_email</span> = <span class="s">'change-this-email-'</span></div>
<div class="c" style="left:636.2px;top:705.6px"><span class="v">$user_data</span>[<span class="s">'email'</span>] = <span class="v">$temporary_user_email</span>;</div>
<div class="c" style="left:636.2px;top:727.6px"><span class="v">$user_data</span>[<span class="s">'username'</span>] = <span class="v">$temporary_user_email</span>;</div>
<div class="c" style="left:636.2px;top:749.6px"><span class="v">$user_data</span>[<span class="s">'is_temporary_user'</span>] = <span class="k">true</span>;</div>
<div class="c" style="left:604.2px;top:771.6px">} <span class="k">else</span> {</div>
<div class="c" style="left:636.2px;top:793.6px"><span class="v">$user_data</span>[<span class="s">'username'</span>] = <span class="v">$user_data</span>[</div>
<div class="b" style="left:507px;top:795.7px;width:310px;height:10.5px;background:rgba(115,115,115,0.27);"></div>
<div class="b" style="left:427px;top:40px;width:829px;height:45.5px;background:#fff;box-shadow:0 1px 3px rgba(0,0,0,0.13);border-bottom:1px solid #e3e4e8;box-sizing:border-box;"></div>
<div class="ln" style="top:43.0px;">47</div>
<div class="ln" style="top:64.5px;">867</div>
<div class="c" style="left:508.2px;top:42.7px"><span class="k">class</span> <span class="wavy">Wtamocrmusersync</span> <span class="k">extends</span> CMSPlugin <span class="k">implements</span> SubscriberInterface</div>
<div class="c" style="left:540.2px;top:64.2px"><span class="k">public function</span> <span class="f wavy">createUsers</span>(<span class="k">array</span> <span class="v">$contacts</span>): <span class="k">void</span></div>
<svg style="left:1103px;top:47.8px;" width="12" height="11" viewBox="0 0 12 11" fill="none"><path d="M5.1 1.1 Q5.8 -0.1 6.5 1.1 L11.3 9.4 Q11.9 10.9 10.5 10.9 H1.1 Q-0.3 10.9 0.3 9.4 Z" fill="#f2b545"/><path d="M5.8 3.6 V6.8" stroke="#fff" stroke-width="1.5" stroke-linecap="round"/><circle cx="5.8" cy="8.9" r="0.85" fill="#fff"/></svg>
<div class="t" style="left:1118.70px;top:44.60px;line-height:20px;font-size:11.5px;color:#6c707e;letter-spacing:-1.906px;">1</div>
<svg style="left:1132px;top:47.8px;" width="12" height="11" viewBox="0 0 12 11" fill="none"><path d="M5.1 1.1 Q5.8 -0.1 6.5 1.1 L11.3 9.4 Q11.9 10.9 10.5 10.9 H1.1 Q-0.3 10.9 0.3 9.4 Z" fill="#d9d2b5"/><path d="M5.8 3.6 V6.8" stroke="#fff" stroke-width="1.5" stroke-linecap="round"/><circle cx="5.8" cy="8.9" r="0.85" fill="#fff"/></svg>
<div class="t" style="left:1147.75px;top:44.60px;line-height:20px;font-size:11.5px;color:#6c707e;letter-spacing:0.852px;">40</div>
<svg style="left:1170.5px;top:46px;" width="14" height="15" viewBox="0 0 14 15" fill="none"><path d="M1.5 6.8 L4.8 10.2 L11.5 2.3" stroke="#3f9b50" stroke-width="1.8" stroke-linecap="round" stroke-linejoin="round"/><path d="M1 13.6 L2.6 12.4 L4.2 13.6 L5.8 12.4 L7.4 13.6 L9 12.4 L10.6 13.6" stroke="#e5484d" stroke-width="0.9"/></svg>
<div class="t" style="left:1186.90px;top:44.60px;line-height:20px;font-size:11.5px;color:#6c707e;letter-spacing:0.471px;">104</div>
<svg style="left:1215px;top:46.1px;" width="16" height="16" viewBox="0 0 16 16" fill="none"><path d="M4.4 9.7 L8 6.1 L11.6 9.7" stroke="#818594" stroke-width="1.1" stroke-linecap="round" stroke-linejoin="round"/></svg>
<svg style="left:1235.7px;top:46.2px;" width="16" height="16" viewBox="0 0 16 16" fill="none"><path d="M4.4 6.3 L8 9.9 L11.6 6.3" stroke="#818594" stroke-width="1.1" stroke-linecap="round" stroke-linejoin="round"/></svg>
<div class="b" style="left:1256px;top:40px;width:1px;height:768px;background:#ebecf0;"></div>
<div class="b" style="left:1242px;top:83.8px;width:14px;height:2.2px;background:#d9d2a6;"></div>
<div class="b" style="left:1242px;top:131.2px;width:14px;height:1.8px;background:#d9d2a6;"></div>
<div class="b" style="left:1242px;top:133.9px;width:14px;height:2.1px;background:#d9d2a6;"></div>
<div class="b" style="left:1242px;top:162px;width:14px;height:1.6px;background:#c77dea;"></div>
<div class="b" style="left:1242px;top:230px;width:14px;height:1.6px;background:#d9d2a6;"></div>
<div class="b" style="left:1242px;top:258.2px;width:14px;height:1.6px;background:#d9d2a6;"></div>
<div class="b" style="left:1242px;top:286.5px;width:14px;height:2.5px;background:#d2c69c;"></div>
<div class="b" style="left:1242px;top:304px;width:14px;height:1.8px;background:#d2c69c;"></div>
<div class="b" style="left:1257px;top:40px;width:302px;height:768px;background:#fff;"></div>
<svg style="left:1268px;top:47.8px;" width="16" height="16" viewBox="0 0 16 16" fill="none"><circle cx="8" cy="8" r="6.5" fill="#edf3ff" stroke="#3574f0" stroke-width="1"/><path d="M10.3 6.2 A3 3 0 1 0 10.3 9.8" stroke="#3574f0" stroke-width="1.1" stroke-linecap="round"/></svg>
<div class="t" style="left:1289.50px;top:46.80px;line-height:20px;font-size:13px;color:#5a5d6b;letter-spacing:0.475px;">AmocrmRequest.php</div>
<svg style="left:1268px;top:77.8px;" width="16" height="16" viewBox="0 0 16 16" fill="none"><path d="M4.5 4.5 L1.2 8 L4.5 11.5 M11.5 4.5 L14.8 8 L11.5 11.5 M9.6 3 L6.4 13" stroke="#e5721f" stroke-width="1.2" stroke-linecap="round" stroke-linejoin="round"/></svg>
<div class="t" style="left:1289.50px;top:76.80px;line-height:20px;font-size:13px;color:#5a5d6b;letter-spacing:0.580px;">wtimportamocrmcontacts.xml</div>
<svg style="left:1268px;top:107.8px;" width="16" height="16" viewBox="0 0 16 16" fill="none"><circle cx="8" cy="8" r="6.5" fill="#edf3ff" stroke="#3574f0" stroke-width="1"/><path d="M10.3 6.2 A3 3 0 1 0 10.3 9.8" stroke="#3574f0" stroke-width="1.1" stroke-linecap="round"/></svg>
<div class="t" style="left:1289.50px;top:106.80px;line-height:20px;font-size:13px;color:#000;letter-spacing:0.497px;">Wtamocrmusersync.php</div>
<svg style="left:1268px;top:137.8px;" width="16" height="16" viewBox="0 0 16 16" fill="none"><path d="M2.3 3 H13.3 M2.3 13.5 H13.3 M4.6 3 V5 H11.2 V3 M4.6 13.5 V11.5 H11.2 V13.5 M4.6 5 Q6.6 8.2 4.6 11.5 M11.2 5 Q9.2 8.2 11.2 11.5" stroke="#6c707e" stroke-width="1" stroke-linecap="round" stroke-linejoin="round"/></svg>
<div class="t" style="left:1289.50px;top:136.80px;line-height:20px;font-size:13px;color:#5a5d6b;letter-spacing:0.344px;">ru-RU\pkg_lib_wt_amocrm.sys.ini</div>
<svg style="left:1268px;top:167.8px;" width="16" height="16" viewBox="0 0 16 16" fill="none"><path d="M2.3 3 H13.3 M2.3 13.5 H13.3 M4.6 3 V5 H11.2 V3 M4.6 13.5 V11.5 H11.2 V13.5 M4.6 5 Q6.6 8.2 4.6 11.5 M11.2 5 Q9.2 8.2 11.2 11.5" stroke="#6c707e" stroke-width="1" stroke-linecap="round" stroke-linejoin="round"/></svg>
<div class="t" style="left:1289.50px;top:166.80px;line-height:20px;font-size:13px;color:#5a5d6b;letter-spacing:0.351px;">en-GB\pkg_lib_wt_amocrm.sys.ini</div>
<svg style="left:1268px;top:197.8px;" width="16" height="16" viewBox="0 0 16 16" fill="none"><path d="M4.8 5 L1.5 8.3 L4.8 11.6 M11 8.6 L13.6 10 L10.5 12.6" stroke="#55a76a" stroke-width="1.2" stroke-linecap="round" stroke-linejoin="round"/><circle cx="11.5" cy="4.5" r="3.2" fill="#3574f0"/><path d="M11.5 2.8 V4.6 L12.7 5.3" stroke="#fff" stroke-width="0.9" stroke-linecap="round"/></svg>
<div class="t" style="left:1289.50px;top:196.80px;line-height:20px;font-size:13px;color:#5a5d6b;letter-spacing:0.664px;">test.html</div>
<svg style="left:1268px;top:227.8px;" width="16" height="16" viewBox="0 0 16 16" fill="none"><circle cx="8" cy="8" r="6.5" fill="#edf3ff" stroke="#3574f0" stroke-width="1"/><path d="M10.3 6.2 A3 3 0 1 0 10.3 9.8" stroke="#3574f0" stroke-width="1.1" stroke-linecap="round"/></svg>
<div class="t" style="left:1289.50px;top:226.80px;line-height:20px;font-size:13px;color:#5a5d6b;letter-spacing:0.494px;">EntitymodalselectField.php</div>
<svg style="left:1268px;top:257.8px;" width="16" height="16" viewBox="0 0 16 16" fill="none"><circle cx="8" cy="8" r="6.5" fill="#edf3ff" stroke="#3574f0" stroke-width="1"/><path d="M10.3 6.2 A3 3 0 1 0 10.3 9.8" stroke="#3574f0" stroke-width="1.1" stroke-linecap="round"/></svg>
<div class="t" style="left:1289.50px;top:256.80px;line-height:20px;font-size:13px;color:#5a5d6b;letter-spacing:0.450px;">Amocrm.php</div>
<svg style="left:1268px;top:287.8px;" width="16" height="16" viewBox="0 0 16 16" fill="none"><circle cx="8" cy="8" r="6.5" fill="#f4fcf5" stroke="#4aa564" stroke-width="1"/><path d="M6.2 5 H9.8 M8 5 V11 M6.2 11 H9.8" stroke="#4aa564" stroke-width="1.1" stroke-linecap="round"/></svg>
<div class="t" style="left:1289.50px;top:286.80px;line-height:20px;font-size:13px;color:#5a5d6b;letter-spacing:0.573px;">EntityInterface.php</div>
<svg style="left:1538.5px;top:112px;" width="9" height="9" viewBox="0 0 9 9" fill="none"><path d="M1 1 L8 8 M8 1 L1 8" stroke="#818594" stroke-width="1"/></svg>
<div class="b" style="left:1256.3px;top:101.3px;width:3.5px;height:30.6px;background:#a4a7c4;border-radius:2px;"></div>
<div class="b" style="left:1257px;top:808px;width:302px;height:22px;background:#fdf9e4;"></div>
<svg style="left:1268px;top:796.8px;" width="16" height="16" viewBox="0 0 16 16" fill="none"><circle cx="8" cy="8" r="6.5" fill="#edf3ff" stroke="#3574f0" stroke-width="1"/><path d="M10.3 6.2 A3 3 0 1 0 10.3 9.8" stroke="#3574f0" stroke-width="1.1" stroke-linecap="round"/></svg>
<div class="t" style="left:1289.50px;top:794.20px;line-height:20px;font-size:13px;color:#5a5d6b;letter-spacing:-0.199px;">NameHelper.php</div>
<svg style="left:1268px;top:828.3px;" width="16" height="16" viewBox="0 0 16 16" fill="none"><circle cx="8" cy="8" r="6.5" fill="#f4fcf5" stroke="#4aa564" stroke-width="1"/><path d="M6.2 5 H9.8 M8 5 V11 M6.2 11 H9.8" stroke="#4aa564" stroke-width="1.1" stroke-linecap="round"/></svg>
<div class="b" style="left:1496px;top:808px;width:57px;height:12.6px;background:#fffefa;"></div>
<svg style="left:1508.6px;top:805.4px;" width="16" height="16" viewBox="0 0 16 16" fill="none"><path d="M4.4 6.3 L8 9.9 L11.6 6.3" stroke="#6c707e" stroke-width="1.1" stroke-linecap="round" stroke-linejoin="round"/></svg>
<div class="b" style="left:1542.1px;top:807.6px;width:2px;height:2px;background:#6c707e;border-radius:1px"></div>
<div class="b" style="left:1542.1px;top:812.6px;width:2px;height:2px;background:#6c707e;border-radius:1px"></div>
<div class="b" style="left:1542.1px;top:817.6px;width:2px;height:2px;background:#6c707e;border-radius:1px"></div>
<div class="b" style="left:1559px;top:40px;width:40px;height:790px;background:#f7f8fa;"></div>
<div class="b" style="left:1559px;top:40px;width:1px;height:790px;background:#ebecf0;"></div>
<svg style="left:1570px;top:51px;" width="20" height="20" viewBox="0 0 20 20" fill="none"><polygon points="10.00,0.20 12.83,3.16 16.93,3.07 16.84,7.17 19.80,10.00 16.84,12.83 16.93,16.93 12.83,16.84 10.00,19.80 7.17,16.84 3.07,16.93 3.16,12.83 0.20,10.00 3.16,7.17 3.07,3.07 7.17,3.16" fill="#5f6169" stroke="#5f6169" stroke-width="1.5" stroke-linejoin="round"/></svg>
<svg style="left:1570px;top:91px;" width="20" height="20" viewBox="0 0 20 20" fill="none"><path d="M10 2.2 C6.3 2.2 5 5 5 8 V11.5 L3 14.5 H17 L15 11.5 V8 C15 7 14.9 6.3 14.7 5.7" stroke="#6c707e" stroke-width="1.4" stroke-linecap="round" stroke-linejoin="round"/><path d="M8.3 17.3 Q10 18.8 11.7 17.3" stroke="#6c707e" stroke-width="1.4" stroke-linecap="round"/><circle cx="16.3" cy="3.6" r="3.4" fill="#3574f0"/></svg>
<svg style="left:1570px;top:131px;" width="20" height="20" viewBox="0 0 20 20" fill="none"><path d="M15.5 5.5 C13.5 2.3 7.5 2 4.5 5 C1.5 8 2.5 13.5 6.5 14.8 M12.2 7.5 C11 5.8 8 5.8 6.8 7.6 C5.6 9.4 6.4 11.6 8 12.2" stroke="#6c707e" stroke-width="1.4" stroke-linecap="round"/><path d="M10 9 H18.5 V15.5 H17.5 L18.6 18.3 L14.5 15.5 H10 Z" stroke="#6c707e" stroke-width="1.3" stroke-linejoin="round" fill="#f7f8fa"/></svg>
<svg style="left:1570px;top:171px;" width="20" height="20" viewBox="0 0 20 20" fill="none"><rect x="2.5" y="2.3" width="15" height="6.4" rx="2" stroke="#6c707e" stroke-width="1.4"/><rect x="2.5" y="11.3" width="15" height="6.4" rx="2" stroke="#6c707e" stroke-width="1.4"/><path d="M5.5 5.5 H8 M5.5 14.5 H8" stroke="#6c707e" stroke-width="1.4" stroke-linecap="round"/></svg>
<svg style="left:1570px;top:211px;" width="20" height="20" viewBox="0 0 20 20" fill="none"><ellipse cx="10" cy="5" rx="7.3" ry="3.2" stroke="#6c707e" stroke-width="1.4"/><path d="M2.7 5 V15.5 C2.7 17.3 6 18.7 10 18.7 C14 18.7 17.3 17.3 17.3 15.5 V5 M2.7 8.6 C2.7 10.4 6 11.8 10 11.8 C14 11.8 17.3 10.4 17.3 8.6 M2.7 12.1 C2.7 13.9 6 15.3 10 15.3 C14 15.3 17.3 13.9 17.3 12.1" stroke="#6c707e" stroke-width="1.4"/></svg>
<div class="b" style="left:427px;top:806px;width:830px;height:24px;background:#fff;box-shadow:0 -1px 1px rgba(0,0,0,0.04);"></div>
<div class="t" style="left:437.00px;top:809.20px;line-height:20px;font-size:13px;color:#6c707e;letter-spacing:0.554px;">\Joomla\Plugin\User\Wtamocrmusersync\Extension</div>
<svg style="left:764px;top:810.8px;" width="16" height="16" viewBox="0 0 16 16" fill="none"><path d="M6.8 4.9 L9.7 8 L6.8 11.1" stroke="#a8adbd" stroke-width="1.05" stroke-linecap="round" stroke-linejoin="round"/></svg>
<div class="t" style="left:783.50px;top:809.20px;line-height:20px;font-size:13px;color:#6c707e;letter-spacing:0.478px;">Wtamocrmusersync</div>
<svg style="left:911.5px;top:810.8px;" width="16" height="16" viewBox="0 0 16 16" fill="none"><path d="M6.8 4.9 L9.7 8 L6.8 11.1" stroke="#a8adbd" stroke-width="1.05" stroke-linecap="round" stroke-linejoin="round"/></svg>
<div class="t" style="left:930.00px;top:809.20px;line-height:20px;font-size:13px;color:#6c707e;letter-spacing:0.558px;">createUsers()</div>
<div class="b" style="left:915px;top:308px;width:684.5px;height:501.5px;background:#fff;border:1px solid #adaeb4;box-sizing:border-box;box-shadow:0 1px 4px rgba(0,0,0,0.10);"></div>
<div class="b" style="left:1589px;top:309px;width:10px;height:121px;background:#e3e3e4;"></div>
<svg style="left:936.3px;top:326px;" width="15" height="15" viewBox="0 0 15 15" fill="none"><circle cx="7.5" cy="7.5" r="6.4" fill="#edf3ff" stroke="#3574f0" stroke-width="1"/><path d="M9.7 5.7 A2.9 2.9 0 1 0 9.7 9.3" stroke="#3574f0" stroke-width="1.1" stroke-linecap="round"/></svg>
<div class="c" style="left:956.3px;top:325.6px;line-height:18px;height:18px;"><span class="lk">Notes</span></div>
<div class="c" style="left:936.5px;top:353.7px;line-height:18px;height:18px;"><span class="k">public function</span> <span class="f">addNotes</span>(</div>
<div class="c" style="left:968.5px;top:371.7px;line-height:18px;height:18px;"><span class="k">string</span> <span class="v">$entity_type</span> = 'leads',</div>
<div class="c" style="left:968.5px;top:389.6px;line-height:18px;height:18px;"><span class="k">int</span> <span class="v">$entity_id</span> = 0,</div>
<div class="c" style="left:968.5px;top:407.5px;line-height:18px;height:18px;"><span class="k">array</span> <span class="v">$notes</span> = []</div>
<div class="c" style="left:936.5px;top:425.4px;line-height:18px;height:18px;">): <span class="k">object</span></div>
<div class="b" style="left:933px;top:450.5px;width:634px;height:1px;background:#ebecf0;"></div>
<div class="t" style="left:936.30px;top:464.30px;line-height:20px;font-size:13px;color:#1e1f26;letter-spacing:0.589px;">Добавление примечаний</div>
<div class="t" style="left:936.70px;top:499.40px;line-height:26px;font-size:19.3px;color:#000;letter-spacing:1.381px;-webkit-text-stroke:0.5px #000;">Метод</div>
<div class="t" style="left:936.30px;top:534.30px;line-height:20px;font-size:13px;color:#1e1f26;letter-spacing:0.586px;">POST /api/v4/{entity_type}/notes POST /api/v4/{entity_type}/{entity_id}/notes</div>
<div class="t" style="left:936.70px;top:568.80px;line-height:26px;font-size:19.3px;color:#000;letter-spacing:1.098px;-webkit-text-stroke:0.5px #000;">Описание</div>
<div class="t" style="left:936.30px;top:603.50px;line-height:20px;font-size:13px;color:#1e1f26;letter-spacing:0.550px;">Метод позволяет добавлять примечания в аккаунт пакетно.</div>
<div class="t" style="left:936.70px;top:638.90px;line-height:26px;font-size:19.3px;color:#000;letter-spacing:1.361px;-webkit-text-stroke:0.5px #000;">Ограничения</div>
<div class="t" style="left:936.30px;top:673.60px;line-height:20px;font-size:13px;color:#1e1f26;letter-spacing:0.561px;">Метод доступен всем пользователям аккаунта. Успешность выполнения действия зависит от</div>
<div class="t" style="left:936.30px;top:694.90px;line-height:20px;font-size:13px;color:#1e1f26;letter-spacing:0.413px;">прав на сущность.</div>
<div class="t" style="left:936.70px;top:730.70px;line-height:26px;font-size:19.3px;color:#000;letter-spacing:1.297px;-webkit-text-stroke:0.5px #000;">Типы примечаний (note_type)</div>
<div class="b" style="left:940px;top:777.8px;width:4.4px;height:4.4px;background:#1e1f26;border-radius:3px"></div>
<div class="b" style="left:949.4px;top:770.8000000000001px;width:51.39999999999998px;height:18.8px;background:#f4f5f7;border-radius:4px;"></div>
<div class="t" style="left:954.60px;top:770.40px;line-height:20px;font-size:12px;color:#2b2d36;font-family:'Liberation Mono', monospace;letter-spacing:-0.336px;-webkit-text-stroke:0.2px #2b2d36;">common</div>
<div class="t" style="left:1005.80px;top:770.20px;line-height:20px;font-size:13px;color:#1e1f26;letter-spacing:0.547px;">- Текстовое примечание. Обязателен массив</div>
<div class="b" style="left:1306.5px;top:770.8000000000001px;width:50.299999999999955px;height:18.8px;background:#f4f5f7;border-radius:4px;"></div>
<div class="t" style="left:1311.30px;top:770.40px;line-height:20px;font-size:12px;color:#2b2d36;font-family:'Liberation Mono', monospace;letter-spacing:-0.353px;-webkit-text-stroke:0.2px #2b2d36;">params</div>
<div class="t" style="left:1359.50px;top:770.20px;line-height:20px;font-size:13px;color:#1e1f26;">:</div>
<div class="b" style="left:1366.4px;top:770.8000000000001px;width:174.0px;height:18.8px;background:#f4f5f7;border-radius:4px;"></div>
<div class="t" style="left:1370.80px;top:770.40px;line-height:20px;font-size:12px;color:#2b2d36;font-family:'Liberation Mono', monospace;letter-spacing:-0.206px;-webkit-text-stroke:0.2px #2b2d36;">params['text'] = 'Текст</div>
<div class="b" style="left:949.4px;top:791.6px;width:99.6px;height:17.2px;background:#f4f5f7;border-radius:4px 4px 0 0;"></div>
<div class="t" style="left:954.60px;top:791.60px;line-height:20px;font-size:12px;color:#2b2d36;font-family:'Liberation Mono', monospace;letter-spacing:-0.363px;-webkit-text-stroke:0.2px #2b2d36;">примечания.';</div>
<svg style="left:1546.3px;top:776px;" width="16" height="16" viewBox="0 0 16 16" fill="none"><path d="M2.6 13.6 L3.3 10.4 L10.6 3.1 a1.7 1.7 0 0 1 2.5 2.5 L5.8 12.9 Z M9.3 4.5 L11.7 6.9" stroke="#6c707e" stroke-width="1.1" stroke-linejoin="round"/></svg>
<div class="b" style="left:1579px;top:778px;width:2px;height:2px;background:#6c707e;border-radius:1px"></div>
<div class="b" style="left:1579px;top:782.8px;width:2px;height:2px;background:#6c707e;border-radius:1px"></div>
<div class="b" style="left:1579px;top:787.6px;width:2px;height:2px;background:#6c707e;border-radius:1px"></div>
<svg style="left:918.5px;top:302.5px;" width="14" height="22" viewBox="0 0 14 22" fill="none"><path d="M1 1 V17.2 L4.9 13.6 L7.6 20 L10.3 18.8 L7.6 12.6 H12.6 Z" fill="#fff" stroke="#000" stroke-width="1" stroke-linejoin="round"/></svg>
<div class="b" style="left:0px;top:830px;width:1599px;height:28px;background:#f7f8fa;border-top:1px solid #ebecf0;box-sizing:border-box;"></div>
<div class="b" style="left:14px;top:841px;width:8px;height:8px;background:transparent;border:1.1px solid #3574f0;border-radius:2px;box-sizing:border-box;"></div>
<div class="t" style="left:26.00px;top:835.20px;line-height:20px;font-size:13px;color:#6c707e;letter-spacing:0.589px;">WT-Amo-CRM-library-for-Joomla-4</div>
<svg style="left:250.5px;top:836.6px;" width="16" height="16" viewBox="0 0 16 16" fill="none"><path d="M6.8 4.9 L9.7 8 L6.8 11.1" stroke="#8b8f9c" stroke-width="1.05" stroke-linecap="round" stroke-linejoin="round"/></svg>
<div class="t" style="left:271.00px;top:835.20px;line-height:20px;font-size:13px;color:#6c707e;letter-spacing:0.457px;">plg_user_wtamocrmusersync</div>
<svg style="left:455.5px;top:836.6px;" width="16" height="16" viewBox="0 0 16 16" fill="none"><path d="M6.8 4.9 L9.7 8 L6.8 11.1" stroke="#8b8f9c" stroke-width="1.05" stroke-linecap="round" stroke-linejoin="round"/></svg>
<div class="t" style="left:475.50px;top:835.20px;line-height:20px;font-size:13px;color:#6c707e;letter-spacing:0.552px;">src</div>
<svg style="left:498.5px;top:836.6px;" width="16" height="16" viewBox="0 0 16 16" fill="none"><path d="M6.8 4.9 L9.7 8 L6.8 11.1" stroke="#8b8f9c" stroke-width="1.05" stroke-linecap="round" stroke-linejoin="round"/></svg>
<div class="t" style="left:518.50px;top:835.20px;line-height:20px;font-size:13px;color:#6c707e;letter-spacing:0.490px;">Extension</div>
<svg style="left:584.5px;top:836.6px;" width="16" height="16" viewBox="0 0 16 16" fill="none"><path d="M6.8 4.9 L9.7 8 L6.8 11.1" stroke="#8b8f9c" stroke-width="1.05" stroke-linecap="round" stroke-linejoin="round"/></svg>
<svg style="left:604px;top:837.5px;" width="16" height="16" viewBox="0 0 16 16" fill="none"><circle cx="8" cy="8" r="6.5" fill="#edf3ff" stroke="#3574f0" stroke-width="1"/><path d="M10.3 6.2 A3 3 0 1 0 10.3 9.8" stroke="#3574f0" stroke-width="1.1" stroke-linecap="round"/></svg>
<div class="t" style="left:625.00px;top:835.20px;line-height:20px;font-size:13px;color:#6c707e;letter-spacing:0.492px;">Wtamocrmusersync.php</div>
<div class="t" style="left:1003.50px;top:835.20px;line-height:20px;font-size:13px;color:#6c707e;letter-spacing:-0.066px;">PHP: 8.1</div>
<svg style="left:1071px;top:836.5px;" width="15" height="15" viewBox="0 0 15 15" fill="none"><path d="M3.5 1.5 H11.5 V6 H3.5 Z" fill="#c3c6cf"/><path d="M8.2 1.5 V6" stroke="#f7f8fa" stroke-width="0.9"/></svg>
<div class="t" style="left:1071.2px;top:844.5px;font-size:6px;line-height:7px;font-weight:700;color:#5a3a00;background:#f4c45e;letter-spacing:-0.35px;padding:0 0.4px">SFTP</div>
<div class="t" style="left:1088.50px;top:835.20px;line-height:20px;font-size:13px;color:#6c707e;letter-spacing:0.608px;">daykerov.demowt.ru</div>
<div class="t" style="left:1232.50px;top:835.20px;line-height:20px;font-size:13px;color:#6c707e;letter-spacing:0.182px;">1011:55 (8 chars)</div>
<div class="t" style="left:1355.00px;top:835.20px;line-height:20px;font-size:13px;color:#6c707e;letter-spacing:-0.988px;">CRLF</div>
<div class="t" style="left:1402.50px;top:835.20px;line-height:20px;font-size:13px;color:#6c707e;letter-spacing:0.531px;">UTF-8</div>
<svg style="left:1458px;top:835.5px;" width="18" height="17" viewBox="0 0 18 17" fill="none"><ellipse cx="8" cy="10" rx="3.6" ry="4.4" stroke="#6c707e" stroke-width="1.1"/><path d="M5 6.8 L3.4 5 M4.4 10 H1.8 M5 13.2 L3.2 15 M11 13.2 L12.8 15 M11.6 10 H14 M6.2 6 a1.9 1.9 0 0 1 3.6 0" stroke="#6c707e" stroke-width="1.1" stroke-linecap="round"/><path d="M12 1 L16.5 5.5 M16.5 1 L12 5.5" stroke="#e55765" stroke-width="1.2" stroke-linecap="round"/></svg>
<div class="t" style="left:1495.00px;top:835.20px;line-height:20px;font-size:13px;color:#6c707e;letter-spacing:0.307px;">4 spaces</div>
<svg style="left:1568px;top:836.5px;" width="16" height="16" viewBox="0 0 16 16" fill="none"><rect x="1.5" y="7" width="9" height="7" rx="1.3" stroke="#6c707e" stroke-width="1.1"/><path d="M8 7 V4.8 a2.7 2.7 0 0 1 5.4 0 V6" stroke="#6c707e" stroke-width="1.1" stroke-linecap="round"/><circle cx="6" cy="10.5" r="0.9" fill="#6c707e"/></svg>
<div class="b" style="left:0px;top:859.5px;width:1599px;height:39.5px;background:#d7d7d7;"></div>
<svg style="left:16px;top:872px;" width="16" height="16" viewBox="0 0 16 16" fill="none"><path d="M0 2.3 L6.8 1.3 V7.5 H0 Z M7.8 1.15 L16 0 V7.5 H7.8 Z M0 8.5 H6.8 V14.7 L0 13.7 Z M7.8 8.5 H16 V16 L7.8 14.85 Z" fill="#000"/></svg>
<svg style="left:63px;top:868px;" width="24" height="24" viewBox="0 0 24 24" fill="none"><defs><linearGradient id="eg1" x1="0" y1="0" x2="1" y2="1"><stop offset="0" stop-color="#35c1f1"/><stop offset="0.6" stop-color="#1b9de2"/><stop offset="1" stop-color="#0c59a4"/></linearGradient><linearGradient id="eg2" x1="0" y1="0" x2="1" y2="0"><stop offset="0" stop-color="#2bc3d2"/><stop offset="1" stop-color="#6fdc5a"/></linearGradient></defs><circle cx="12" cy="12" r="11.5" fill="url(#eg1)"/><path d="M2.5 6 C6 -1 18 -1 22.5 6.5 C25 11 22 15.5 17 15.5 C15 15.5 14 14.5 15 13 C16.5 10 12.5 6.5 8 8 C5 9 3 12 2.5 14 C1 11 1.3 8.5 2.5 6 Z" fill="url(#eg2)"/><path d="M8 10.5 C5 14 7 21 14 22.5 C18 23 21.5 21 23 17.5 C20 20 14 19.5 12.5 15.5 C12 13.5 12.5 12.5 13.3 12 C11.5 9.5 9 9.7 8 10.5 Z" fill="#1263b4"/><circle cx="12" cy="12.8" r="2.1" fill="#d7e7f7"/></svg>
<svg style="left:112px;top:869.5px;" width="24" height="20" viewBox="0 0 24 20" fill="none"><g transform="scale(1,1.08)"><path d="M1 2.2 a1.2 1.2 0 0 1 1.2 -1.2 H8 l1.5 2 H1 Z" fill="#e2a91a"/><path d="M1 3 H21 a1.2 1.2 0 0 1 1.2 1.2 V17 H1 Z" fill="#ffd766"/><path d="M5 17 V12 a1.5 1.5 0 0 1 1.5 -1.5 H16 a1.5 1.5 0 0 1 1.5 1.5 V17 H14 V14 H8.5 V17 Z" fill="#3a8bd6"/><rect x="8.5" y="14" width="5.5" height="3" fill="#f2c94c"/></g></svg>
<div class="b" style="left:104px;top:897.4px;width:40px;height:1.6px;background:#3c8dcb;"></div>
<svg style="left:161px;top:868px;" width="24" height="24" viewBox="0 0 24 24" fill="none"><circle cx="12" cy="12" r="11.7" fill="#fff"/><path d="M5.5 5.5 L12 12.5 V20.5" stroke="#f5492b" stroke-width="3.2" stroke-linecap="round" fill="none"/><path d="M12 12.5 L18.5 5.5" stroke="#f56fd0" stroke-width="3.2" stroke-linecap="round"/><path d="M12 12.5 L15 9.2" stroke="#f5492b" stroke-width="3.2" stroke-linecap="round"/></svg>
<svg style="left:210px;top:868px;" width="24" height="24" viewBox="0 0 24 24" fill="none"><rect width="24" height="24" fill="#ef443b"/><path d="M8.5 7.3 L13.2 12 L8.5 16.7 L3.8 12 Z" fill="#fff"/><path d="M13.5 7.3 L18.2 12 L13.5 16.7 L12 15.2 L15.2 12 L12 8.8 Z" fill="#fff"/></svg>
<svg style="left:259px;top:868px;" width="24" height="24" viewBox="0 0 24 24" fill="none"><rect width="24" height="24" fill="#fff"/><path d="M10 9 V20 L12.8 17.3 L14.8 21.5 L16.5 20.7 L14.6 16.6 H18.2 Z" fill="#000"/><path d="M11.5 2 V6" stroke="#3f8f7a" stroke-width="1.6"/><path d="M5 4 L7.3 7" stroke="#d8c63a" stroke-width="1.6"/><path d="M18.5 4.5 L16.5 7" stroke="#7fae4a" stroke-width="1.6"/><path d="M2 11.5 H6.5" stroke="#e12ad8" stroke-width="1.8"/><path d="M18 11.5 H22" stroke="#2320c4" stroke-width="1.8"/><path d="M4.5 18 L7 15.5" stroke="#d83030" stroke-width="1.6"/></svg>
<svg style="left:308px;top:868px;" width="21" height="24" viewBox="0 0 21 24" fill="none"><rect x="0.5" y="0.5" width="19" height="23" fill="#f2f2f2" stroke="#8a8a8a"/><rect x="2" y="2" width="16" height="14" fill="#3f74c8"/><path d="M2 6 C6 2 12 3 18 2 V9 C12 8 8 11 2 10 Z" fill="#9cc2ee"/><rect x="2" y="16" width="16" height="3" fill="#1a2f66"/><path d="M21 6 L9 17 L6.5 19.5" stroke="#b0303a" stroke-width="1.8" stroke-linecap="round"/><path d="M7.5 18.5 L4.5 21" stroke="#ddd" stroke-width="2" stroke-linecap="round"/></svg>
<div class="b" style="left:300px;top:897.4px;width:40px;height:1.6px;background:#3c8dcb;"></div>
<svg style="left:357px;top:868px;" width="24" height="24" viewBox="0 0 24 24" fill="none"><path d="M0.5 2 a1.5 1.5 0 0 1 1.5 -1.5 H22 a1.5 1.5 0 0 1 1.5 1.5 V22 a1.5 1.5 0 0 1 -1.5 1.5 H2.5 L0.5 21.5 Z" fill="#2a48c8"/><rect x="6.5" y="0.5" width="11" height="7" fill="#c9cdd6"/><rect x="10.5" y="1.5" width="3" height="5" fill="#2a48c8"/><rect x="3.5" y="11" width="17" height="12" fill="#fdeeee"/><path d="M4.5 14 H19.5 M4.5 17 H19.5 M4.5 20 H15" stroke="#e98a8a" stroke-width="0.9"/><path d="M14.5 19 H19.5 V22.5 H14.5 Z" fill="#333" opacity=".75"/></svg>
<div class="b" style="left:349px;top:897.4px;width:40px;height:1.6px;background:#3c8dcb;"></div>
<svg style="left:406px;top:868px;" width="24" height="24" viewBox="0 0 24 24" fill="none"><defs><radialGradient id="ff1" cx="0.7" cy="0.2" r="1"><stop offset="0" stop-color="#fff36b"/><stop offset="0.35" stop-color="#ff9a1f"/><stop offset="0.75" stop-color="#ff3e3a"/><stop offset="1" stop-color="#e31587"/></radialGradient></defs><path d="M12 2.5 C14 0.5 17 0 18 1 C18 3.5 20.5 4.5 22.3 8 C24.5 13 22.5 20 16 22.7 C9 25 2 21 0.8 14 C0 10 2 6 3.5 5 C3.5 6.3 4 7 4.6 7.4 C6 5 9 3.5 12 2.5 Z" fill="url(#ff1)"/><circle cx="12.3" cy="12.8" r="5.6" fill="#7a3fd6"/><path d="M6.5 11 C8.5 8.3 12 8.8 14.5 10.5 C12 10.5 10.8 12 12.5 13.8 C9 15 6.5 13.5 6.5 11 Z" fill="#ff8a16"/></svg>
<div class="b" style="left:443px;top:859.5px;width:46.5px;height:39.5px;background:#ebebeb;"></div>
<div class="b" style="left:489.5px;top:859.5px;width:1px;height:39.5px;background:#c8c8c8;"></div>
<div class="b" style="left:443px;top:897.4px;width:47px;height:1.6px;background:#3c8dcb;"></div>
<svg style="left:455px;top:868px;" width="25" height="25" viewBox="0 0 25 25" fill="none"><path d="M2 3 L18 0.5 L24.5 9 L20 24 L6 24.5 L0.5 14 Z" fill="#b345f1"/><path d="M12 2 L24.5 9 L21 22 L10 20 Z" fill="#ff318c" opacity=".85"/><path d="M10 10 L24.5 9 L20 24 L12 24 Z" fill="#7c5cf5" opacity=".9"/><rect x="3.5" y="3.5" width="15.5" height="15.5" fill="#000"/><path d="M5.5 16 H11" stroke="#fff" stroke-width="1.3"/></svg>
<div class="t" style="left:460px;top:873.5px;font-size:7.2px;line-height:8px;font-weight:700;color:#fff;letter-spacing:-0.1px">PS</div>
<svg style="left:504px;top:868px;" width="24" height="24" viewBox="0 0 24 24" fill="none"><circle cx="12" cy="12" r="11.8" fill="#fc3f1d"/></svg>
<div class="t" style="left:509.3px;top:870.5px;font-size:17px;line-height:20px;font-weight:700;color:#fff;">Я</div>
<svg style="left:552px;top:867px;" width="26" height="26" viewBox="0 0 26 26" fill="none"><rect x="11" y="1" width="11" height="8.5" fill="#d8d8e8" stroke="#222" stroke-width="1"/><rect x="12.5" y="2.5" width="8" height="5.3" fill="#2233c8"/><path d="M10 11.5 H23.5 L22 9.5 H11.5 Z" fill="#e6e6e6" stroke="#222" stroke-width="0.8"/><rect x="2.5" y="12.5" width="11" height="8.5" fill="#d8d8e8" stroke="#222" stroke-width="1"/><rect x="4" y="14" width="8" height="5.3" fill="#2233c8"/><path d="M1 24 H15.5 L14 21.5 H2.5 Z" fill="#e6e6e6" stroke="#222" stroke-width="0.8"/><path d="M17 7 L11.5 12.5 H14.5 L10 17.5 L18 11.5 H15 L19 7 Z" fill="#ffe11f" stroke="#8a7a00" stroke-width="0.5"/></svg>
<svg style="left:602px;top:868px;" width="24" height="24" viewBox="0 0 24 24" fill="none"><circle cx="12" cy="12" r="11.8" fill="#fff"/><path d="M12 12 L1.78 6.1 A11.8 11.8 0 0 1 22.22 6.1 Z" fill="#e94335"/><path d="M12 12 L22.22 6.1 A11.8 11.8 0 0 1 12 23.8 Z" fill="#fbbc05"/><path d="M12 12 L12 23.8 A11.8 11.8 0 0 1 1.78 6.1 Z" fill="#34a853"/><circle cx="12" cy="12" r="5.5" fill="#fff"/><circle cx="12" cy="12" r="4.3" fill="#4285f4"/></svg>
<div class="b" style="left:594px;top:897.4px;width:40px;height:1.6px;background:#3c8dcb;"></div>
<div class="b" style="left:639px;top:859.5px;width:45px;height:39.5px;background:#f6a86c;"></div>
<div class="b" style="left:639px;top:897.4px;width:45px;height:1.6px;background:#e67a2e;"></div>
<svg style="left:652px;top:869px;" width="22" height="22" viewBox="0 0 22 22" fill="none"><rect width="22" height="22" rx="1.5" fill="#2c2c2c"/><path d="M22 11.5 V20.5 a1.5 1.5 0 0 1 -1.5 1.5 H11.5 Z" fill="#f8d51c"/></svg>
<div class="b" style="left:687.5px;top:859.5px;width:49px;height:39.5px;background:#f6a86c;"></div>
<div class="b" style="left:687.5px;top:897.4px;width:49.0px;height:1.6px;background:#e67a2e;"></div>
<svg style="left:700px;top:868px;" width="24" height="24" viewBox="0 0 24 24" fill="none"><circle cx="12" cy="12" r="11.8" fill="#2aa3dc"/><path d="M5 11.7 L18.5 6.3 L16.3 17.8 L12.5 15 L10.5 17 L10.2 13.6 L16 8.5 L8.8 12.9 Z" fill="#fff"/></svg>
<div class="b" style="left:709.5px;top:884px;width:16.5px;height:10.5px;background:#e53935;border-radius:2px;"></div>
<div class="t" style="left:710.5px;top:884.5px;font-size:8.5px;line-height:10px;color:#fff;font-weight:700;letter-spacing:-0.2px">..13</div>
<svg style="left:749px;top:867px;" width="25" height="26" viewBox="0 0 25 26" fill="none"><path d="M12.5 0.8 L24 9 L12.5 25 L1 17 Z" fill="#3a3a3a"/><path d="M12.5 3 L21.5 9.5 L12.5 22.5 L3.5 16.5 Z" fill="#e9e3d2"/><path d="M15.5 3.5 L7.5 13 L12.2 14 L9 22.5 L17.5 11.8 L12.8 11 Z" fill="#f7941d" stroke="#3a2a00" stroke-width="0.6"/></svg>
<div class="b" style="left:741px;top:897.4px;width:40px;height:1.6px;background:#3c8dcb;"></div>
<svg style="left:799px;top:869px;" width="23" height="22" viewBox="0 0 23 22" fill="none"><rect x="2" y="2.5" width="19" height="16" fill="#bfe3f5"/><path d="M2 12 C7 8 11 13 15 11 C18 10 20 11 21 12 V18.5 H2 Z" fill="#5a9e9e"/><path d="M2 15 C8 12 14 16 21 14 V18.5 H2 Z" fill="#3e7f8f"/><path d="M0.5 5 V1 H4.5 M18.5 1 H22.5 V5 M22.5 16 V20.5 H18.5 M4.5 20.5 H0.5 V16" stroke="#2f86d8" stroke-width="1.6" fill="none"/></svg>
<div class="b" style="left:790px;top:897.4px;width:39px;height:1.6px;background:#3c8dcb;"></div>
<svg style="left:1330px;top:873.5px;" width="14" height="12" viewBox="0 0 14 12" fill="none"><path d="M1 9 L7 3 L13 9" stroke="#000" stroke-width="1.3" fill="none"/></svg>
<svg style="left:1354px;top:872px;" width="17" height="17" viewBox="0 0 17 17" fill="none"><circle cx="7.5" cy="8.5" r="6.3" fill="none" stroke="#333" stroke-width="1.6"/><path d="M7.5 8.5 L7.5 2.5 A6 6 0 0 1 13 6 Z" fill="#333"/><path d="M4.5 5 L7.5 8.5" stroke="#333" stroke-width="1.4"/><circle cx="12.5" cy="12.5" r="3.6" fill="#e53935"/></svg>
<svg style="left:1377.5px;top:872px;" width="17" height="17" viewBox="0 0 17 17" fill="none"><circle cx="7.8" cy="8.3" r="7.6" fill="#2f8be6"/><path d="M2.5 8.3 H5" stroke="#fff" stroke-width="1"/><rect x="6" y="6.3" width="10.5" height="8" rx="1.5" fill="#e8352e"/></svg>
<div class="t" style="left:1389.3px;top:879.2px;font-size:6.5px;line-height:8px;color:#fff;font-weight:700">3</div>
<svg style="left:1401px;top:872px;" width="16" height="17" viewBox="0 0 16 17" fill="none"><rect x="2" y="2.5" width="11" height="11" fill="none" stroke="#1e88e5" stroke-width="1.6" stroke-dasharray="3.2 1.6"/><path d="M11.5 10 V16 M8.5 13 H14.5" stroke="#1e88e5" stroke-width="1.6"/></svg>
<svg style="left:1425px;top:871px;" width="17" height="18" viewBox="0 0 17 18" fill="none"><path d="M3 2 V17" stroke="#2e7d32" stroke-width="1.6"/><path d="M3 3 C6 1 8 5 11 3.5 C13 2.5 14.5 3 16 3.5 V11 C13.5 10 12 12 9.5 11.5 C7 11 5.5 9.5 3 11 Z" fill="#43a047" stroke="#1b5e20" stroke-width="0.8"/></svg>
<svg style="left:1449px;top:872px;" width="18" height="17" viewBox="0 0 18 17" fill="none"><rect x="1" y="2.5" width="13" height="9" fill="none" stroke="#000" stroke-width="1.3"/><path d="M4 15.5 H11 M7.5 11.5 V15.5 M16.5 5 V16" stroke="#000" stroke-width="1.3"/></svg>
<svg style="left:1473px;top:872px;" width="18" height="17" viewBox="0 0 18 17" fill="none"><path d="M1.5 6.5 H4.5 L8.5 2.5 V14.5 L4.5 10.5 H1.5 Z" fill="none" stroke="#000" stroke-width="1.2" stroke-linejoin="round"/><path d="M11 5.5 Q13 8.5 11 11.5 M13.3 3.5 Q16.5 8.5 13.3 13.5" stroke="#000" stroke-width="1.1" fill="none" stroke-linecap="round"/></svg>
<div class="t" style="left:1500.00px;top:870.30px;line-height:20px;font-size:12px;color:#000;letter-spacing:-1.339px;">ENG</div>
<div class="t" style="left:1548.50px;top:860.80px;line-height:20px;font-size:12px;color:#000;letter-spacing:-0.506px;">18:57</div>
<div class="t" style="left:1535.00px;top:878.80px;line-height:20px;font-size:12px;color:#000;letter-spacing:-0.606px;">30.09.2025</div>
<div class="b" style="left:1594.5px;top:859.5px;width:1px;height:39.5px;background:#a8a8a8;"></div>
</body></html>
